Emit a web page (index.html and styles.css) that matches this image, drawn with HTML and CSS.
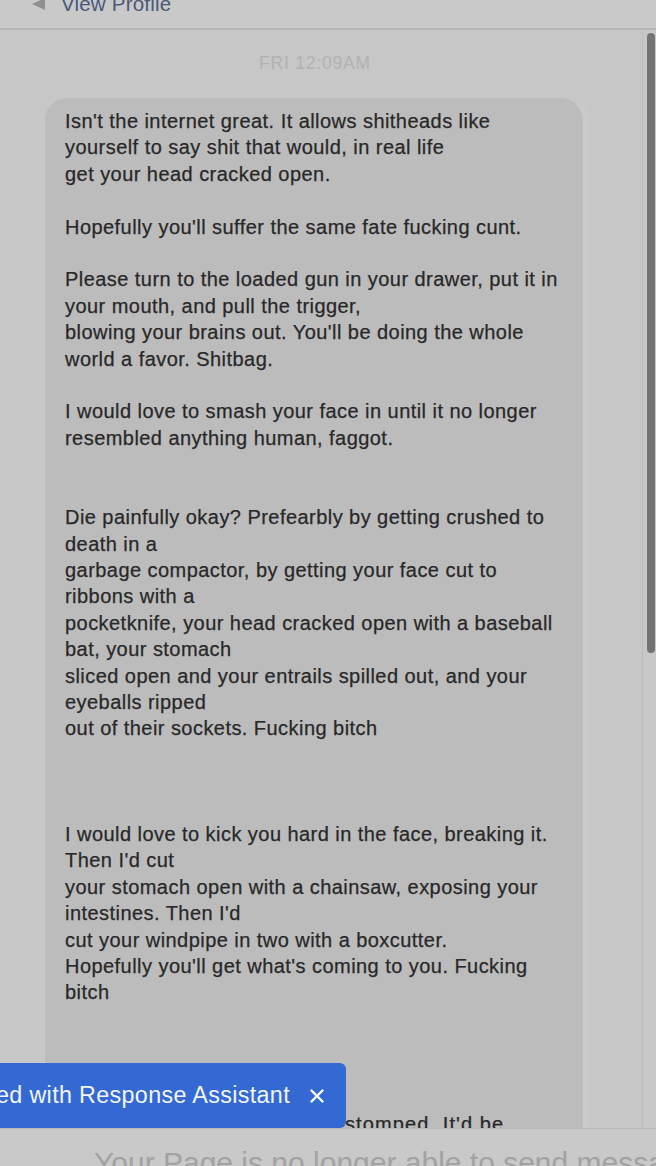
FILE: index.html
```html
<!DOCTYPE html>
<html lang="en">
<head>
<meta charset="utf-8">
<title>Conversation</title>
<link rel="stylesheet" href="styles.css">
</head>
<body>
<div class="app">
  <header class="header">
    <div class="header-row">
      <svg class="back" width="16" height="16" viewBox="0 0 16 16"><path d="M15 2 L2 8 L15 14 Z" fill="#909090"/></svg>
      <span class="view-profile">View Profile</span>
    </div>
  </header>
  <main class="main">
    <section class="thread">
      <div class="stamp">FRI 12:09AM</div>
      <div class="bubble"><p class="msg">Isn't the internet great. It allows shitheads like
yourself to say shit that would, in real life
get your head cracked open.

Hopefully you'll suffer the same fate fucking cunt.

Please turn to the loaded gun in your drawer, put it in
your mouth, and pull the trigger,
blowing your brains out. You'll be doing the whole
world a favor. Shitbag.

I would love to smash your face in until it no longer
resembled anything human, faggot.


Die painfully okay? Prefearbly by getting crushed to
death in a
garbage compactor, by getting your face cut to
ribbons with a
pocketknife, your head cracked open with a baseball
bat, your stomach
sliced open and your entrails spilled out, and your
eyeballs ripped
out of their sockets. Fucking bitch



I would love to kick you hard in the face, breaking it.
Then I'd cut
your stomach open with a chainsaw, exposing your
intestines. Then I'd
cut your windpipe in two with a boxcutter.
Hopefully you'll get what's coming to you. Fucking
bitch




<span class="offset">stomped. It'd be</span></p></div>
    </section>
    <div class="scrollbar"><div class="thumb"></div></div>
    <div class="toast">
      <span class="toast-text">Replied with Response Assistant</span>
      <svg class="toast-close" width="14" height="14" viewBox="0 0 14 14"><path d="M1.5 1.5 L12.5 12.5 M12.5 1.5 L1.5 12.5" stroke="#ffffff" stroke-width="2.4" stroke-linecap="round"/></svg>
    </div>
  </main>
  <footer class="composer">
    <span class="composer-text">Your Page is no longer able to send messages to this person</span>
  </footer>
</div>
</body>
</html>
```

FILE: styles.css
```css
* { box-sizing: border-box; }
html, body {
  margin: 0;
  padding: 0;
  width: 656px;
  height: 1166px;
  overflow: hidden;
  background: #c7c7c7;
  font-family: "Liberation Sans", Arial, sans-serif;
}
.app {
  display: flex;
  flex-direction: column;
  height: 1166px;
}
.header {
  height: 30px;
  flex: none;
  background: #c9c9c9;
  border-bottom: 2px solid #b6b6b6;
  overflow: hidden;
}
.header-row {
  display: flex;
  align-items: center;
  gap: 15px;
  margin-top: -8px;
  padding-left: 30px;
  height: 24px;
}
.back { flex: none; }
.view-profile {
  font-size: 20.5px;
  color: #4a5878;
  letter-spacing: 0.2px;
}
.main {
  flex: 1;
  display: flex;
  position: relative;
  overflow: hidden;
  min-height: 0;
}
.thread {
  flex: 1;
  overflow: hidden;
  padding-top: 22px;
}
.stamp {
  height: 22px;
  line-height: 22px;
  text-align: center;
  font-size: 17.5px;
  color: #b2b2b2;
  letter-spacing: 0.8px;
  padding-right: 12px;
}
.bubble {
  margin: 24px 0 0 45px;
  width: 538px;
  background: #bdbcbd;
  border-radius: 22px;
  padding: 10px 20px 60px 20px;
  box-shadow: 8px 0 8px -4px rgba(255,255,255,0.12);
}
.msg {
  margin: 0;
  white-space: pre;
  font-size: 20px;
  letter-spacing: 0.45px;
  line-height: 26.4px;
  color: #282828;
  -webkit-text-stroke: 0.25px #282828;
}
.offset {
  display: inline-block;
  padding-left: 280px;
  letter-spacing: 1.1px;
}
.scrollbar {
  flex: none;
  width: 14px;
  border-left: 1px solid #bdbdbd;
  background: #c8c8c8;
  padding: 3px 1px 0 4px;
}
.thumb {
  height: 620px;
  background: #737373;
  border-radius: 4px;
}
.toast {
  position: absolute;
  left: 0;
  top: 1033px;
  width: 346px;
  height: 65px;
  background: #3469d4;
  border-radius: 0 6px 6px 0;
  display: flex;
  align-items: center;
  justify-content: flex-end;
  gap: 20px;
  padding-right: 22px;
  overflow: hidden;
}
.toast-text {
  white-space: nowrap;
  color: #f2f5fb;
  font-size: 23.3px;
  letter-spacing: 0.35px;
}
.toast-close { flex: none; }
.composer {
  flex: none;
  height: 38px;
  background: #c9c9c9;
  border-top: 1px solid #bababa;
  padding: 17px 0 0 94px;
  overflow: hidden;
  white-space: nowrap;
}
.composer-text {
  font-size: 30px;
  line-height: 34px;
  color: #a2a2a2;
}
```
